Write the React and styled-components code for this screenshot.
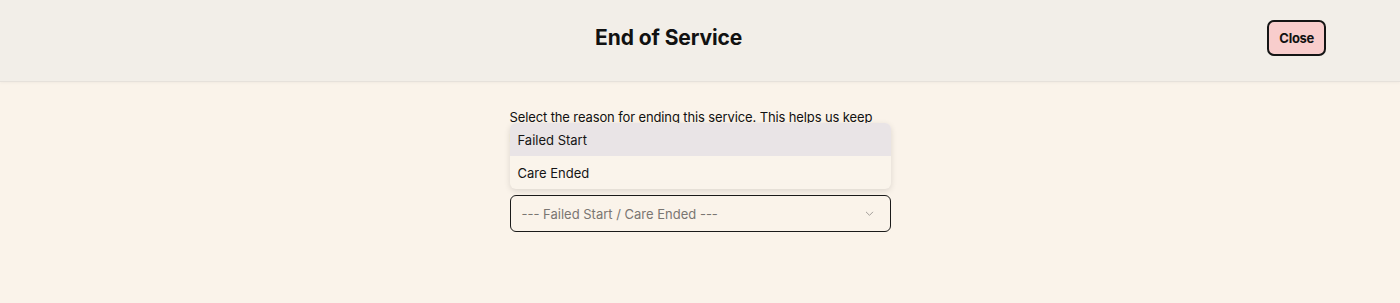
import React, { useState } from 'react';
import styled, { createGlobalStyle } from 'styled-components';

const GlobalStyle = createGlobalStyle`
  * { box-sizing: border-box; }
  html, body {
    margin: 0;
    padding: 0;
    background: #faf3ea;
    font-family: Inter, "Noto Sans", sans-serif;
    color: #111;
  }
`;

const Page = styled.div`
  min-height: 303px;
  background: #faf3ea;
`;

const Header = styled.header`
  height: 82px;
  display: flex;
  align-items: center;
  padding: 0 74px 6px 70px;
  background: #f2eee8;
  border-bottom: 1px solid #e6e1db;
  box-shadow: 0 1px 3px rgba(0, 0, 0, 0.04);
`;

const Title = styled.h1`
  flex: 1;
  margin: 0;
  text-align: center;
  font-size: 21px;
  font-weight: 700;
  letter-spacing: -0.1px;
`;

const CloseButton = styled.button`
  height: 36px;
  padding: 0 10px;
  background: #f8cdcc;
  border: 2px solid #151515;
  border-radius: 7px;
  font-family: inherit;
  font-size: 13px;
  font-weight: 700;
  letter-spacing: -0.3px;
  color: #111;
  cursor: pointer;
`;

const Content = styled.main`
  width: 381px;
  margin: 0 auto;
  padding-top: 25px;
`;

const Intro = styled.p`
  margin: 0 0 48px;
  font-size: 13px;
  line-height: 20px;
  letter-spacing: -0.12px;
`;

const SelectWrap = styled.div`
  position: relative;
`;

const SelectBox = styled.button`
  width: 100%;
  height: 37px;
  display: flex;
  align-items: center;
  justify-content: space-between;
  padding: 0 15px 0 11px;
  background: transparent;
  border: 1px solid #1a1a1a;
  border-radius: 6px;
  font-family: inherit;
  font-size: 13px;
  color: #7a7672;
  cursor: pointer;
`;

const Menu = styled.ul`
  position: absolute;
  left: 0;
  right: 0;
  bottom: calc(100% + 6px);
  margin: 0;
  padding: 0;
  list-style: none;
  background: #faf4eb;
  border-radius: 6px;
  overflow: hidden;
  box-shadow: 0 2px 6px rgba(0, 0, 0, 0.12);
`;

const Option = styled.li`
  height: 33px;
  display: flex;
  align-items: center;
  padding: 0 8px;
  font-size: 13px;
  color: #151515;
  background: ${({ active }) => (active ? '#e9e4e6' : 'transparent')};
`;

const Chevron = () => (
  <svg width="11" height="11" viewBox="0 0 24 24" fill="none" stroke="#9a9692" strokeWidth="2" strokeLinecap="round" strokeLinejoin="round">
    <path d="M5 9l7 7 7-7" />
  </svg>
);

const options = ['Failed Start', 'Care Ended'];

export default function App() {
  const [hovered] = useState(0);

  return (
    <Page>
      <GlobalStyle />
      <Header>
        <Title>End of Service</Title>
        <CloseButton>Close</CloseButton>
      </Header>
      <Content>
        <Intro>
          Select the reason for ending this service. This helps us keep records accurate.
        </Intro>
        <SelectWrap>
          <Menu>
            {options.map((o, i) => (
              <Option key={o} active={i === hovered}>{o}</Option>
            ))}
          </Menu>
          <SelectBox>
            <span>--- Failed Start / Care Ended ---</span>
            <Chevron />
          </SelectBox>
        </SelectWrap>
      </Content>
    </Page>
  );
}
